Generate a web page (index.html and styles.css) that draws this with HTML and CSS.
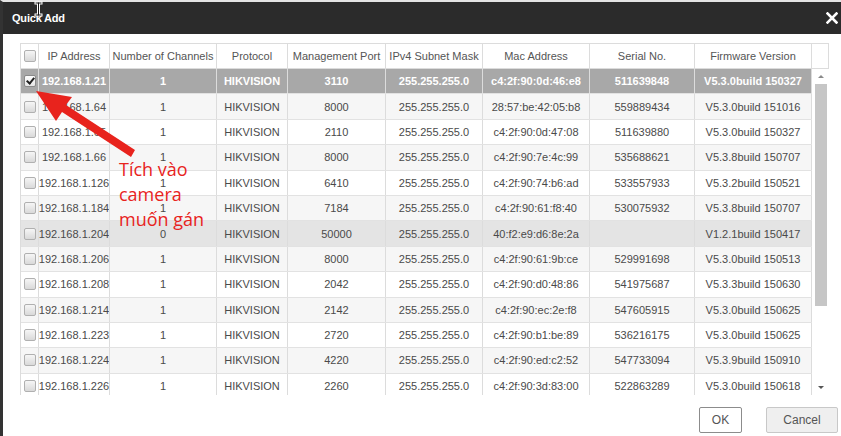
FILE: index.html
```html
<!DOCTYPE html>
<html lang="vi">
<head>
<meta charset="utf-8">
<title>Quick Add</title>
<link rel="stylesheet" href="styles.css">
</head>
<body>
<div class="dialog">
  <div class="titlebar">
    <span class="title">Quick Add</span>
    <svg class="close" width="12" height="12" viewBox="0 0 12 12"><path d="M1.5 1.5 L10.5 10.5 M10.5 1.5 L1.5 10.5" stroke="#fff" stroke-width="2.6" stroke-linecap="square"/></svg>
  </div>
  <div class="content">
    <div class="grid">
      <div class="row head">
        <div class="cell"><span class="cb"></span></div>
        <div class="cell">IP Address</div>
        <div class="cell">Number of Channels</div>
        <div class="cell">Protocol</div>
        <div class="cell">Management Port</div>
        <div class="cell">IPv4 Subnet Mask</div>
        <div class="cell">Mac Address</div>
        <div class="cell">Serial No.</div>
        <div class="cell">Firmware Version</div>
        <div class="cell"></div>
      </div>
      <div class="bodyarea">
        <div class="rows">
          <div class="row sel"><div class="cell"><span class="cb on"></span></div><div class="cell">192.168.1.21</div><div class="cell">1</div><div class="cell">HIKVISION</div><div class="cell">3110</div><div class="cell">255.255.255.0</div><div class="cell">c4:2f:90:0d:46:e8</div><div class="cell">511639848</div><div class="cell">V5.3.0build 150327</div></div>
          <div class="row alt"><div class="cell"><span class="cb"></span></div><div class="cell">192.168.1.64</div><div class="cell">1</div><div class="cell">HIKVISION</div><div class="cell">8000</div><div class="cell">255.255.255.0</div><div class="cell">28:57:be:42:05:b8</div><div class="cell">559889434</div><div class="cell">V5.3.0build 151016</div></div>
          <div class="row"><div class="cell"><span class="cb"></span></div><div class="cell">192.168.1.65</div><div class="cell">1</div><div class="cell">HIKVISION</div><div class="cell">2110</div><div class="cell">255.255.255.0</div><div class="cell">c4:2f:90:0d:47:08</div><div class="cell">511639880</div><div class="cell">V5.3.0build 150327</div></div>
          <div class="row alt"><div class="cell"><span class="cb"></span></div><div class="cell">192.168.1.66</div><div class="cell">1</div><div class="cell">HIKVISION</div><div class="cell">8000</div><div class="cell">255.255.255.0</div><div class="cell">c4:2f:90:7e:4c:99</div><div class="cell">535688621</div><div class="cell">V5.3.8build 150707</div></div>
          <div class="row"><div class="cell"><span class="cb"></span></div><div class="cell">192.168.1.126</div><div class="cell">1</div><div class="cell">HIKVISION</div><div class="cell">6410</div><div class="cell">255.255.255.0</div><div class="cell">c4:2f:90:74:b6:ad</div><div class="cell">533557933</div><div class="cell">V5.3.2build 150521</div></div>
          <div class="row alt"><div class="cell"><span class="cb"></span></div><div class="cell">192.168.1.184</div><div class="cell">1</div><div class="cell">HIKVISION</div><div class="cell">7184</div><div class="cell">255.255.255.0</div><div class="cell">c4:2f:90:61:f8:40</div><div class="cell">530075932</div><div class="cell">V5.3.8build 150707</div></div>
          <div class="row hover"><div class="cell"><span class="cb"></span></div><div class="cell">192.168.1.204</div><div class="cell">0</div><div class="cell">HIKVISION</div><div class="cell">50000</div><div class="cell">255.255.255.0</div><div class="cell">40:f2:e9:d6:8e:2a</div><div class="cell"></div><div class="cell">V1.2.1build 150417</div></div>
          <div class="row alt"><div class="cell"><span class="cb"></span></div><div class="cell">192.168.1.206</div><div class="cell">1</div><div class="cell">HIKVISION</div><div class="cell">8000</div><div class="cell">255.255.255.0</div><div class="cell">c4:2f:90:61:9b:ce</div><div class="cell">529991698</div><div class="cell">V5.3.0build 150513</div></div>
          <div class="row"><div class="cell"><span class="cb"></span></div><div class="cell">192.168.1.208</div><div class="cell">1</div><div class="cell">HIKVISION</div><div class="cell">2042</div><div class="cell">255.255.255.0</div><div class="cell">c4:2f:90:d0:48:86</div><div class="cell">541975687</div><div class="cell">V5.3.3build 150630</div></div>
          <div class="row alt"><div class="cell"><span class="cb"></span></div><div class="cell">192.168.1.214</div><div class="cell">1</div><div class="cell">HIKVISION</div><div class="cell">2142</div><div class="cell">255.255.255.0</div><div class="cell">c4:2f:90:ec:2e:f8</div><div class="cell">547605915</div><div class="cell">V5.3.0build 150625</div></div>
          <div class="row"><div class="cell"><span class="cb"></span></div><div class="cell">192.168.1.223</div><div class="cell">1</div><div class="cell">HIKVISION</div><div class="cell">2720</div><div class="cell">255.255.255.0</div><div class="cell">c4:2f:90:b1:be:89</div><div class="cell">536216175</div><div class="cell">V5.3.0build 150625</div></div>
          <div class="row alt"><div class="cell"><span class="cb"></span></div><div class="cell">192.168.1.224</div><div class="cell">1</div><div class="cell">HIKVISION</div><div class="cell">4220</div><div class="cell">255.255.255.0</div><div class="cell">c4:2f:90:ed:c2:52</div><div class="cell">547733094</div><div class="cell">V5.3.9build 150910</div></div>
          <div class="row"><div class="cell"><span class="cb"></span></div><div class="cell">192.168.1.226</div><div class="cell">1</div><div class="cell">HIKVISION</div><div class="cell">2260</div><div class="cell">255.255.255.0</div><div class="cell">c4:2f:90:3d:83:00</div><div class="cell">522863289</div><div class="cell">V5.3.0build 150618</div></div>
        </div>
        <div class="scrollbar">
          <div class="sb-btn"><span class="tri up"></span></div>
          <div class="thumb"></div>
          <div class="sb-space"></div>
          <div class="sb-btn"><span class="tri down"></span></div>
        </div>
      </div>
    </div>
    <div class="actions">
      <button class="btn ok">OK</button>
      <button class="btn cancel">Cancel</button>
    </div>
  </div>
</div>
<svg class="overlay" width="841" height="436" viewBox="0 0 841 436">
  <polygon points="36,91 72,97 66,105 135,150 131,157 62,112 56,121" fill="#e8231d"/>
  <g stroke-linecap="square">
    <path d="M36 3 H41 M38.5 3 V15 M36 15 H41" stroke="#fff" stroke-width="3"/>
    <path d="M36 3 H41 M38.5 3 V15 M36 15 H41" stroke="#111" stroke-width="1"/>
  </g>
</svg>
<div class="note">Tích vào<br>camera<br>muốn gán</div>
</body>
</html>
```
FILE: styles.css
```css
html, body {
  margin: 0;
  padding: 0;
}
body {
  width: 841px;
  height: 436px;
  overflow: hidden;
  position: relative;
  background: #fff;
  font-family: "Liberation Sans", Arial, sans-serif;
}
.dialog {
  height: 436px;
  box-sizing: border-box;
  border-left: 3px solid #333;
  border-top: 2px solid #e4e4e4;
  background: #fff;
}
.titlebar {
  height: 32px;
  background: #2b2b2b;
  display: flex;
  align-items: center;
  justify-content: space-between;
  padding: 0 3px 0 9px;
}
.title {
  color: #fff;
  font-weight: bold;
  font-size: 11px;
  letter-spacing: -0.2px;
}
.close {
  display: block;
}
.content {
  padding: 9px 3px 0 17px;
}
.grid {
  width: 809px;
  border-top: 1px solid #dcdcdc;
  border-left: 1px solid #dcdcdc;
  box-sizing: border-box;
}
.row {
  display: grid;
  grid-template-columns: 18px 71px 107px 71px 98px 97px 107px 105px 117px;
  height: 25.4px;
  box-sizing: border-box;
  border-bottom: 1px solid #e2e2e2;
}
.row.head {
  grid-template-columns: 18px 71px 107px 71px 98px 97px 107px 105px 117px 17px;
  height: 25px;
  border-bottom: 1px solid #dcdcdc;
}
.cell {
  display: flex;
  align-items: center;
  justify-content: center;
  border-right: 1px solid #dcdcdc;
  font-size: 11px;
  color: #4a4a4a;
  white-space: nowrap;
  overflow: hidden;
}
.head .cell {
  color: #555;
}
.row.alt {
  background: #f6f6f6;
}
.row.hover {
  background: #e4e4e4;
}
.row.sel {
  background: #a8a8a8;
}
.row.sel .cell {
  color: #fff;
  font-weight: bold;
}
.cb {
  display: block;
  width: 10px;
  height: 10px;
  border: 1px solid #b0b0b0;
  border-radius: 2px;
  background: linear-gradient(#f6f6f6, #d9d9d9);
  position: relative;
}
.cb.on {
  background: linear-gradient(#fdfdfd, #e6e6e6);
  border-color: #8a8a8a;
}
.cb.on::after {
  content: "";
  position: absolute;
  left: 3px;
  top: 0px;
  width: 3px;
  height: 6px;
  border-right: 2px solid #222;
  border-bottom: 2px solid #222;
  transform: rotate(40deg);
}
.bodyarea {
  display: flex;
  height: 326px;
  overflow: hidden;
}
.rows {
  width: 791px;
}
.scrollbar {
  width: 17px;
  box-sizing: border-box;
  display: flex;
  flex-direction: column;
  background: #fff;
}
.sb-btn {
  height: 15px;
  display: flex;
  align-items: center;
  justify-content: center;
  flex: none;
}
.tri {
  width: 0;
  height: 0;
  border-left: 3px solid transparent;
  border-right: 3px solid transparent;
}
.tri.up {
  border-bottom: 3px solid #8a8a8a;
}
.tri.down {
  border-top: 3px solid #555;
}
.thumb {
  height: 222px;
  margin: 0 2px 0 3px;
  background: #c6c6c6;
  flex: none;
}
.sb-space {
  flex: 1;
}
.actions {
  display: flex;
  justify-content: flex-end;
  gap: 24px;
  margin-top: 12px;
}
.btn {
  height: 26px;
  font-family: "Liberation Sans", Arial, sans-serif;
  font-size: 12px;
  color: #555;
  border-radius: 2px;
  padding: 0;
  cursor: default;
}
.btn.ok {
  width: 43px;
  background: #fff;
  border: 1px solid #8c8c8c;
}
.btn.cancel {
  width: 72px;
  background: #efefef;
  border: 1px solid #c8c8c8;
}
.overlay {
  position: absolute;
  left: 0;
  top: 0;
  pointer-events: none;
}
.note {
  position: absolute;
  left: 119px;
  top: 157px;
  color: #e8231d;
  font-family: "Open Sans", sans-serif;
  font-size: 18px;
  line-height: 25px;
}
```
